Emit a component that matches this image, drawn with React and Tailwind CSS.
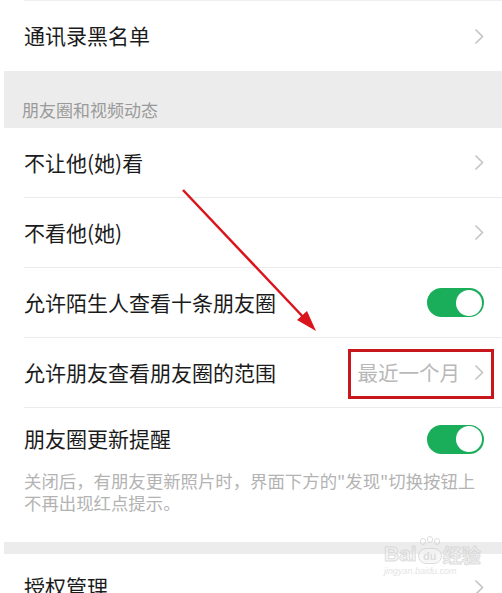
import React from "react";

const font = "font-['Noto_Sans_CJK_SC','Noto_Sans',sans-serif]";

const Chevron = () => (
    <svg width="10" height="17" viewBox="0 0 10 17" className="shrink-0">
        <path d="M1.5 1.5 L8.5 8.5 L1.5 15.5" fill="none" stroke="#c4c4c4" strokeWidth="1.6" />
    </svg>
);

const Toggle = () => (
    <div className="w-[57px] h-[29px] rounded-full bg-[#1aad5a] flex items-center justify-end pr-[2px] shrink-0">
        <div className="w-[26px] h-[26px] rounded-full bg-white" />
    </div>
);

const Row = ({ label, right }) => (
    <div className="bg-white pl-6">
        <div className="h-[70px] flex items-center justify-between pr-[18px] border-b border-[#ebebeb]">
            <span className="text-[21px] text-[#1b1b1b]">{label}</span>
            {right}
        </div>
    </div>
);

export default function App() {
    return (
        <div className={`relative w-[502px] h-[593px] overflow-hidden bg-white ${font}`}>
            {/* 通讯录黑名单 */}
            <div className="bg-white pl-6">
                <div className="h-[71px] flex items-center justify-between pr-[18px] border-t border-[#f0f0f0]">
                    <span className="text-[21px] text-[#1b1b1b]">通讯录黑名单</span>
                    <Chevron />
                </div>
            </div>

            <div className="ml-[4px] h-[57px] bg-[#ececec] flex items-end pl-[18px] pb-[10px]">
                <span className="text-[17px] text-[#9a9a9a] leading-none">朋友圈和视频动态</span>
            </div>

            <Row label="不让他(她)看" right={<Chevron />} />
            <Row label="不看他(她)" right={<Chevron />} />
            <Row label="允许陌生人查看十条朋友圈" right={<Toggle />} />
            <Row
                label="允许朋友查看朋友圈的范围"
                right={
                    <div className="flex items-center gap-[14px]">
                        <span className="text-[20.5px] text-[#b8b8b8]">最近一个月</span>
                        <Chevron />
                    </div>
                }
            />

            {/* 朋友圈更新提醒 */}
            <div className="bg-white pl-6 pr-[18px] h-[134px]">
                <div className="h-[62px] flex items-center justify-between">
                    <span className="text-[21px] text-[#1b1b1b]">朋友圈更新提醒</span>
                    <Toggle />
                </div>
                <p className="text-[17.4px] leading-[22px] text-[#b3b3b3] whitespace-nowrap">
                    关闭后，有朋友更新照片时，界面下方的"发现"切换按钮上
                    <br />
                    不再出现红点提示。
                </p>
            </div>

            <div className="ml-[4px] h-[12px] bg-[#ececec]" />

            <div className="bg-white pl-6">
                <div className="h-[66px] flex items-center justify-between pr-[18px]">
                    <span className="text-[21px] text-[#1b1b1b]">授权管理</span>
                    <Chevron />
                </div>
            </div>

            {/* red highlight box */}
            <div className="absolute left-[348px] top-[349px] w-[146px] h-[50px] border-[3px] border-[#c8161d]" />

            {/* red arrow */}
            <svg className="absolute left-0 top-0 pointer-events-none" width="502" height="593">
                <line x1="183" y1="190" x2="306" y2="320" stroke="#d9151b" strokeWidth="2.5" />
                <polygon points="316,331 297,320 307,311" fill="#d9151b" />
            </svg>

            {/* watermark */}
            <div className="absolute left-[384px] top-[538px] flex flex-col items-start opacity-70">
                <div className="flex items-end">
                    <span className="text-[21px] leading-none font-bold text-[#f4f4f4] [-webkit-text-stroke:1px_#cfcfcf] font-['Liberation_Sans',sans-serif]">
                        Bai
                    </span>
                    <div className="relative w-[24px] h-[26px] mx-[1px]">
                        <div className="absolute left-[2px] top-0 w-[6px] h-[7px] rounded-full border border-[#cfcfcf]" />
                        <div className="absolute left-[9px] top-[-2px] w-[6px] h-[7px] rounded-full border border-[#cfcfcf]" />
                        <div className="absolute left-[16px] top-0 w-[6px] h-[7px] rounded-full border border-[#cfcfcf]" />
                        <div className="absolute left-0 bottom-0 w-[24px] h-[16px] rounded-[8px] border border-[#cfcfcf] bg-[#f4f4f4] flex items-center justify-center">
                            <span className="text-[11px] leading-none font-bold text-[#cfcfcf] font-['Liberation_Sans',sans-serif]">
                                du
                            </span>
                        </div>
                    </div>
                    <span className="text-[19px] leading-none font-bold text-[#f4f4f4] [-webkit-text-stroke:1px_#cfcfcf]">
                        经验
                    </span>
                </div>
                <span className="text-[9px] leading-none mt-[3px] italic text-[#d8d8d8] font-['Liberation_Sans',sans-serif]">
                    jingyan.baidu.com
                </span>
            </div>
        </div>
    );
}
